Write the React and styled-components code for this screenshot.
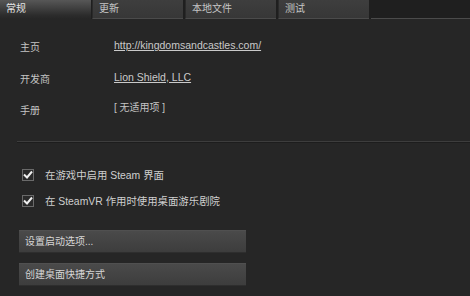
import React from "react";
import styled, { createGlobalStyle } from "styled-components";

const Global = createGlobalStyle`
  html, body { margin: 0; padding: 0; background: #262626; }
  body {
    font-family: "Liberation Sans", Arial, "Noto Sans CJK SC", sans-serif;
    width: 470px;
    height: 296px;
    overflow: hidden;
  }
`;

const Page = styled.div`
  width: 470px;
  height: 296px;
  background: #262626;
  display: flex;
  flex-direction: column;
`;

const TabBar = styled.div`
  display: flex;
  height: 19px;
  background: #1f1f1f;
`;

const Tab = styled.div`
  width: 91px;
  margin-right: ${(p) => (p.$active ? 1 : 2)}px;
  box-sizing: border-box;
  padding-left: 6px;
  font-size: 10px;
  line-height: 18px;
  color: ${(p) => (p.$active ? "#e4e4e4" : "#c6c6c6")};
  background: ${(p) =>
    p.$active
      ? "linear-gradient(#575757, #2c2c2c 80%, #262626)"
      : "linear-gradient(#3e3e3e, #373737)"};
  border-left: ${(p) => (p.$active ? "none" : "1px solid #2a2a2a")};
  border-bottom: ${(p) => (p.$active ? "none" : "1px solid #4b4b4b")};
  height: 19px;
`;

const TabFill = styled.div`
  flex: 1;
  border-bottom: 1px solid #4b4b4b;
  box-sizing: border-box;
`;

const Body = styled.div`
  padding: 17px 0 0 20px;
  display: flex;
  flex-direction: column;
`;

const InfoRow = styled.div`
  display: grid;
  grid-template-columns: 94px 1fr;
  height: 31.5px;
  font-size: 10px;
  line-height: 14px;
  color: #c4c4c4;
`;

const Label = styled.span`
  padding-top: 5px;
`;

const Value = styled.span`
  padding-top: 2px;
`;

const Link = styled.a`
  color: #cacaca;
  font-size: 10.5px;
  text-decoration: underline;
`;

const Divider = styled.div`
  margin: 10px 0 0 -3px;
  height: 1px;
  background: #3d3d3d;
  border-bottom: 1px solid #1d1d1d;
`;

const Checks = styled.div`
  margin-top: 26px;
  display: flex;
  flex-direction: column;
  gap: 14px;
`;

const CheckRow = styled.label`
  display: flex;
  align-items: center;
  height: 12px;
  gap: 11px;
  font-size: 10.4px;
  color: #cfcfcf;
  margin-left: 2px;
`;

const Box = styled.span`
  width: 12px;
  height: 12px;
  box-sizing: border-box;
  border: 1px solid #6a6a6a;
  background: #2a2a2a;
  display: flex;
  align-items: center;
  justify-content: center;
`;

const Buttons = styled.div`
  margin-top: 23px;
  display: flex;
  flex-direction: column;
  gap: 10px;
  margin-left: -1px;
`;

const Button = styled.div`
  width: 227px;
  height: 23px;
  box-sizing: border-box;
  background: linear-gradient(#4a4a4a, #3d3d3d);
  border-top: 1px solid #505050;
  border-bottom: 1px solid #2e2e2e;
  font-size: 10px;
  line-height: 21px;
  padding-left: 6px;
  color: #d6d6d6;
`;

const Check = () => (
  <Box>
    <svg width="10" height="9" viewBox="0 0 10 9">
      <path d="M1 4.5 L4 7.5 L9 1.5" fill="none" stroke="#f0f0f0" strokeWidth="2" />
    </svg>
  </Box>
);

export default function App() {
  return (
    <Page>
      <Global />
      <TabBar>
        <Tab $active>常规</Tab>
        <Tab>更新</Tab>
        <Tab>本地文件</Tab>
        <Tab>测试</Tab>
        <TabFill />
      </TabBar>
      <Body>
        <InfoRow>
          <Label>主页</Label>
          <Value><Link href="#">http://kingdomsandcastles.com/</Link></Value>
        </InfoRow>
        <InfoRow>
          <Label>开发商</Label>
          <Value><Link href="#">Lion Shield, LLC</Link></Value>
        </InfoRow>
        <InfoRow>
          <Label>手册</Label>
          <Value>[ 无适用项 ]</Value>
        </InfoRow>
        <Divider />
        <Checks>
          <CheckRow><Check />在游戏中启用 Steam 界面</CheckRow>
          <CheckRow><Check />在 SteamVR 作用时使用桌面游乐剧院</CheckRow>
        </Checks>
        <Buttons>
          <Button>设置启动选项...</Button>
          <Button>创建桌面快捷方式</Button>
        </Buttons>
      </Body>
    </Page>
  );
}
